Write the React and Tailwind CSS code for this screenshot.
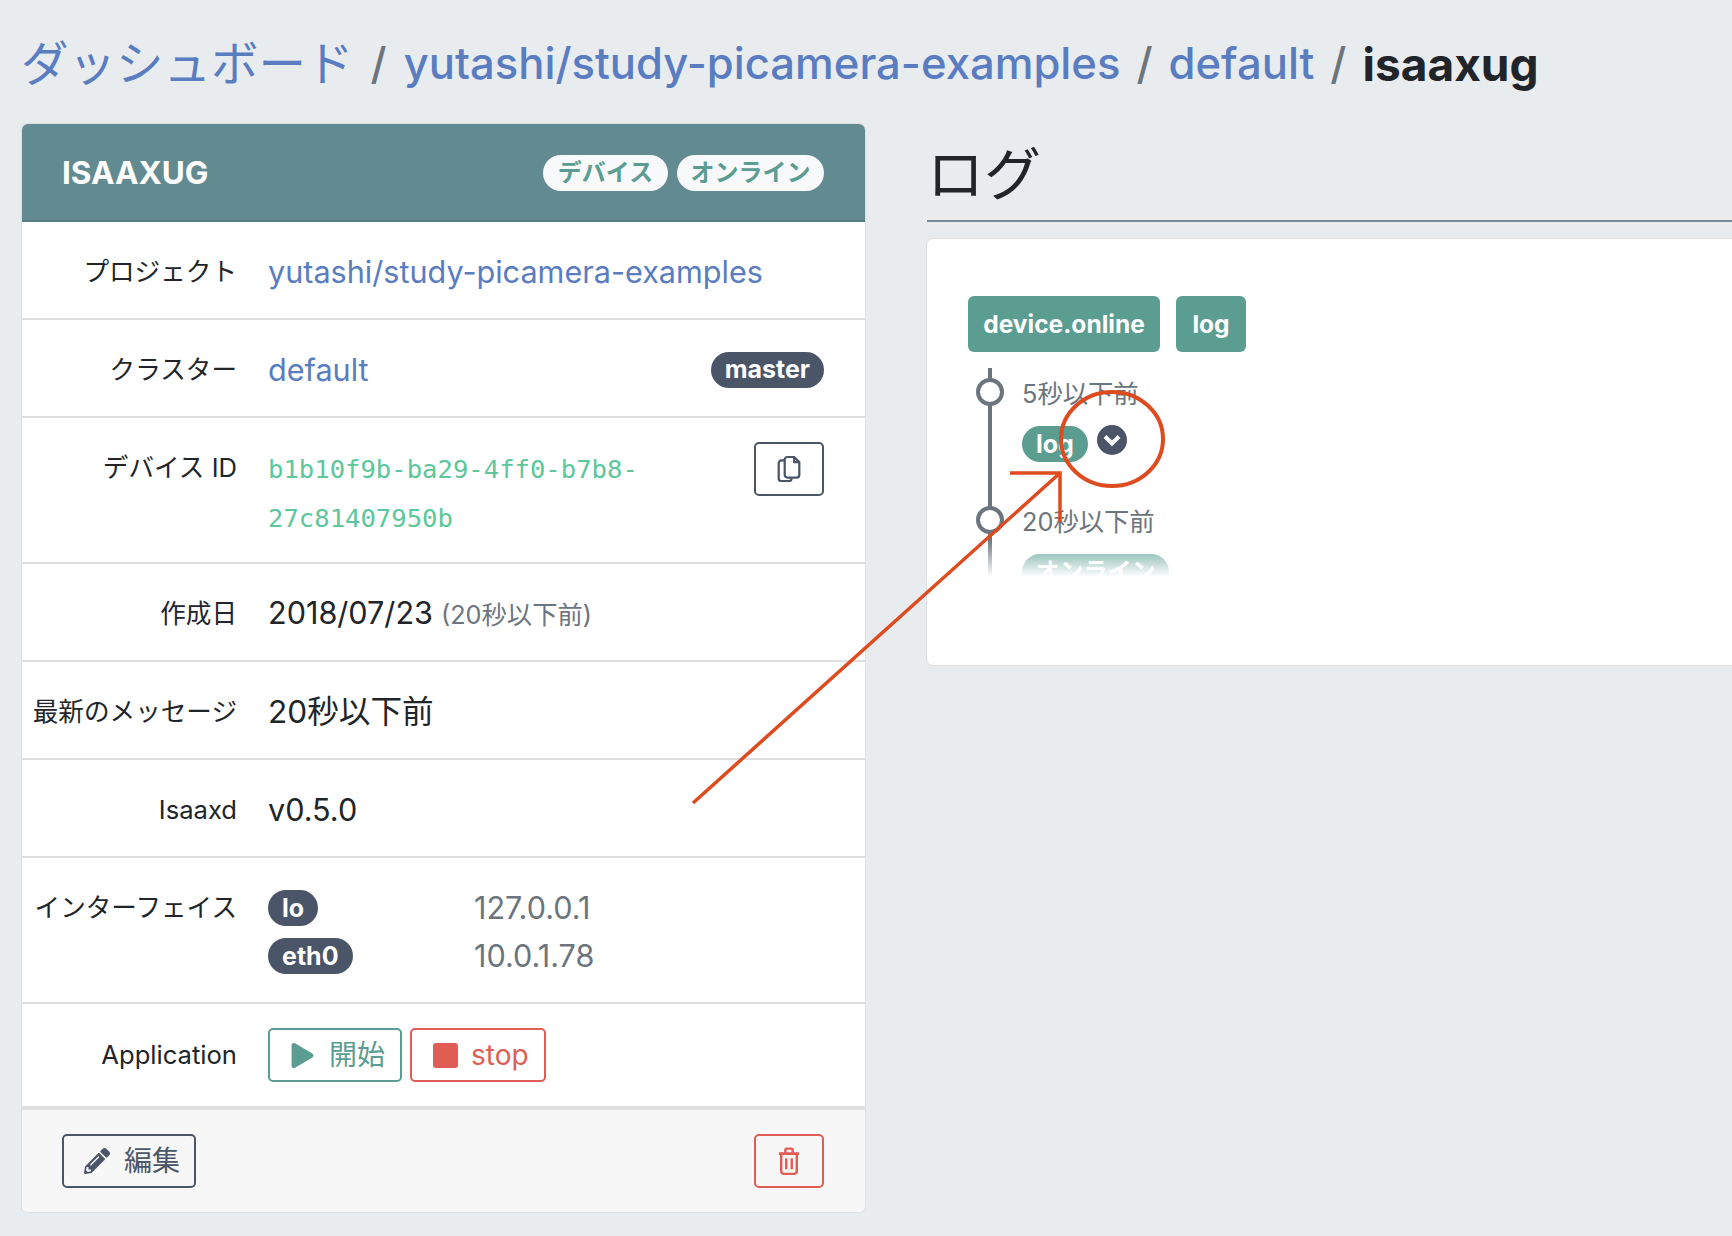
import { FaPencilAlt, FaPlay } from "react-icons/fa"

const font = { fontFamily: '"Inter", "Noto Sans CJK JP", sans-serif' }

const Pill = ({ className = "", children }) => (
    <span className={`inline-flex h-[36px] items-center justify-center rounded-full px-[14px] text-[25px] font-bold leading-none ${className}`}>
        {children}
    </span>
)

const Row = ({ label, className = "h-[98px] items-center pt-[3px]", labelClass = "", children }) => (
    <div className={`flex border-b-2 border-[#dfdfdf] ${className}`}>
        <div className={`w-[215px] shrink-0 text-right text-[25.6px] leading-[36px] text-[#212529] ${labelClass}`}>{label}</div>
        <div className="ml-[31px] mr-[41px] flex min-w-0 flex-1 items-start justify-between text-[30.6px] leading-[44px] text-[#212529]">{children}</div>
    </div>
)

const CopyIcon = () => (
    <svg width="24" height="28" viewBox="0 0 28 32" fill="none" stroke="#4a5568" strokeWidth="2.6" strokeLinejoin="round">
        <path d="M9 6H5a3 3 0 0 0-3 3v18a3 3 0 0 0 3 3h9a3 3 0 0 0 3-3v-1" />
        <path d="M12 2h8l6 6v15a3 3 0 0 1-3 3H12a3 3 0 0 1-3-3V5a3 3 0 0 1 3-3z" />
        <path d="M20 2v6h6" />
    </svg>
)

const TrashIcon = () => (
    <svg width="22" height="28" viewBox="0 0 24 30" fill="none" stroke="#e05d56" strokeWidth="2.6" strokeLinejoin="round">
        <path d="M1 7h22" strokeWidth="3" />
        <path d="M8 6V3a1.5 1.5 0 0 1 1.5-1.5h5A1.5 1.5 0 0 1 16 3v3" />
        <path d="M3.5 7v19a3 3 0 0 0 3 3h11a3 3 0 0 0 3-3V7" />
        <path d="M9 12v12M15 12v12" />
    </svg>
)

const TimelineItem = ({ time, children }) => (
    <div className="relative h-[128px] pl-[54px]">
        <span className="absolute left-[8px] top-[10px] h-[28px] w-[28px] rounded-full border-4 border-[#6c757d] bg-white" />
        <div className="pt-[8px] text-[25.3px] leading-[36px] text-[#6c757d]">{time}</div>
        <div className="mt-[14px] flex items-start">{children}</div>
    </div>
)

const App = () => {
    return (
        <div className="relative h-[1236px] w-[1732px] overflow-hidden bg-[#e9ecef] pl-[21px]" style={font}>
            <nav className="flex h-[124px] items-start pt-[34px] text-[43.6px] font-medium leading-[60px]">
                <a className="text-[47.5px] font-normal text-[#5a7cc0]">ダッシュボード</a>
                <span className="mx-[17px] text-[#6c757d]">/</span>
                <a className="text-[#5a7cc0]">yutashi/study-picamera-examples</a>
                <span className="mx-[16px] text-[#6c757d]">/</span>
                <a className="text-[#5a7cc0]">default</a>
                <span className="mx-[16px] text-[#6c757d]">/</span>
                <span className="text-[46px] font-bold text-[#212529]">isaaxug</span>
            </nav>

            <div className="flex items-start">
                <section className="ml-[1px] w-[843px] shrink-0 overflow-hidden rounded-[6px] bg-white shadow-[0_0_0_1px_#dfdfdf]">
                    <header className="flex h-[98px] items-center justify-between border-b-2 border-[#587c82] bg-[#628a91] px-[40px] pt-[2px]">
                        <h3 className="text-[31.5px] font-bold text-white">ISAAXUG</h3>
                        <div className="mr-[1px] flex gap-[9px]">
                            <Pill className="w-[125px] bg-[#f8f9fa] !px-0 !text-[24px] text-[#5c9d92]">デバイス</Pill>
                            <Pill className="w-[147px] bg-[#f8f9fa] !px-0 !text-[24px] text-[#5c9d92]">オンライン</Pill>
                        </div>
                    </header>
                    <Row label="プロジェクト">
                        <a className="text-[#5a7cc0]">yutashi/study-picamera-examples</a>
                    </Row>
                    <Row label="クラスター">
                        <a className="text-[#5a7cc0]">default</a>
                        <Pill className="mt-[4px] bg-[#4a5568] text-white">master</Pill>
                    </Row>
                    <Row label="デバイス ID" className="h-[146px] items-start pt-[24px]" labelClass="mt-[8px]">
                        <div className="mt-[3px] w-[420px] text-[25.6px] leading-[48.5px] text-[#5cc79a]" style={{ fontFamily: '"DejaVu Sans Mono", monospace' }}>
                            b1b10f9b-ba29-4ff0-b7b8-<br />27c81407950b
                        </div>
                        <button className="flex h-[54px] w-[70px] items-center justify-center rounded-[5px] border-2 border-[#4a5568]">
                            <CopyIcon />
                        </button>
                    </Row>
                    <Row label="作成日">
                        <div className="flex items-baseline">
                            <span>2018/07/23</span>
                            <span className="ml-[8px] text-[25.3px] text-[#6c757d]">(20秒以下前)</span>
                        </div>
                    </Row>
                    <Row label="最新のメッセージ">
                        <span className="text-[31.6px]">20秒以下前</span>
                    </Row>
                    <Row label="Isaaxd">
                        <span>v0.5.0</span>
                    </Row>
                    <Row label="インターフェイス" className="h-[146px] items-start pt-[32px]">
                        <div className="grid grid-cols-[206px_1fr] gap-y-[12px] text-[#6c757d]">
                            <div className="flex h-[36px]"><Pill className="bg-[#4a5568] text-white">lo</Pill></div>
                            <div className="leading-[36px]">127.0.0.1</div>
                            <div className="flex h-[36px]"><Pill className="bg-[#4a5568] text-white">eth0</Pill></div>
                            <div className="leading-[36px]">10.0.1.78</div>
                        </div>
                    </Row>
                    <Row label="Application" className="h-[106px] items-center border-b-4">
                        <div className="flex gap-[8px]">
                            <button className="flex h-[54px] w-[134px] items-center gap-[14px] rounded-[5px] border-2 border-[#5c9d92] pl-[20px] text-[28px] text-[#5c9d92]">
                                <FaPlay className="text-[25px]" />開始
                            </button>
                            <button className="flex h-[54px] w-[136px] items-center gap-[13px] rounded-[5px] border-2 border-[#e05d56] pl-[21px] text-[28px] text-[#e05d56]">
                                <span className="h-[25px] w-[25px] rounded-[3px] bg-[#e05d56]" />stop
                            </button>
                        </div>
                    </Row>
                    <footer className="flex h-[102px] items-center justify-between bg-[#f7f7f7] pb-[1px] pl-[40px] pr-[41px]">
                        <button className="flex h-[54px] w-[134px] items-center gap-[14px] rounded-[5px] border-2 border-[#4a5568] pl-[20px] text-[28px] text-[#4a5568]">
                            <FaPencilAlt className="text-[26px]" />編集
                        </button>
                        <button className="flex h-[54px] w-[70px] items-center justify-center rounded-[5px] border-2 border-[#e05d56]">
                            <TrashIcon />
                        </button>
                    </footer>
                </section>

                <section className="ml-[62px] w-[900px] shrink-0">
                    <h2 className="h-[98px] border-b-2 border-[#7b8a97] text-[57px] leading-[101px] text-[#212529]">ログ</h2>
                    <div className="mt-[17px] h-[426px] rounded-[6px] bg-white pl-[41px] pt-[57px] shadow-[0_0_0_1px_#dfdfdf]">
                        <div className="flex gap-[16px]">
                            <span className="flex h-[56px] w-[192px] items-center justify-center rounded-[6px] bg-[#5c9d92] text-[24.5px] font-bold text-white">device.online</span>
                            <span className="flex h-[56px] w-[70px] items-center justify-center rounded-[6px] bg-[#5c9d92] text-[24.5px] font-bold text-white">log</span>
                        </div>
                        <div className="relative mt-[16px] h-[209px] w-[400px] overflow-hidden">
                            <span className="absolute left-[20px] top-0 h-full w-[4px] bg-[#6c757d]" />
                            <TimelineItem time="5秒以下前">
                                <Pill className="bg-[#5c9d92] text-white">log</Pill>
                                <span className="ml-[9px] -mt-[1px] flex h-[30px] w-[30px] items-center justify-center rounded-full bg-[#4a5568]">
                                    <svg width="20" height="15" viewBox="0 0 20 15" fill="none" stroke="#fff" strokeWidth="4"><path d="M3 3.5l7 7 7-7" /></svg>
                                </span>
                            </TimelineItem>
                            <TimelineItem time="20秒以下前">
                                <Pill className="w-[147px] bg-[#5c9d92] !px-0 !text-[24px] text-white">オンライン</Pill>
                            </TimelineItem>
                            <div className="absolute inset-x-0 bottom-0 h-[38px] bg-gradient-to-t from-white to-transparent" />
                        </div>
                    </div>
                </section>
            </div>

            {/* annotation drawn over the screenshot */}
            <svg className="pointer-events-none absolute left-0 top-0" width="1732" height="1236" fill="none" stroke="#dd4b1f" strokeWidth="4">
                <ellipse cx="1112" cy="439" rx="51" ry="47" />
                <path d="M693 803L1060 473M1010 473H1060V522" strokeWidth="3.5" />
            </svg>
        </div>
    )
}

export default App
